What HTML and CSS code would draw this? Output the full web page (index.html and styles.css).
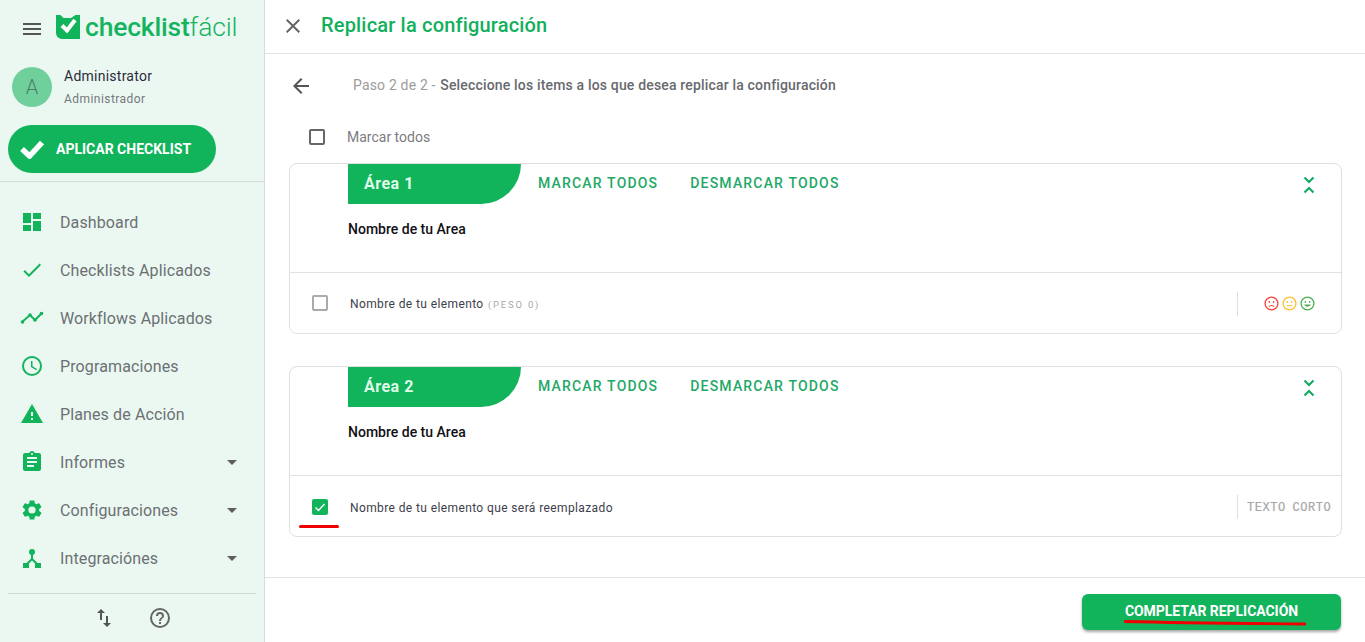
FILE: index.html
```html
<!DOCTYPE html>
<html lang="es">
<head>
<meta charset="utf-8">
<title>Replicar la configuración</title>
<link rel="stylesheet" href="styles.css">
</head>
<body>
<div class="app">
  <aside class="sidebar">
    <div class="brand">
      <svg class="burger" viewBox="0 0 18 12" width="18" height="12"><path d="M0 0h18v2H0zM0 5h18v2H0zM0 10h18v2H0z" fill="#555"/></svg>
      <svg class="logo-mark" viewBox="0 0 24 24" width="24" height="24"><path d="M0 0h4.500l3 3H15l4.500-3H24v24H6a6 6 0 0 1-6-6z" fill="#11b35b"/><path d="M6 10.500l5 5L19 5" fill="none" stroke="#fff" stroke-width="4"/></svg>
      <span class="logo-text"><b>checklist</b><i>fácil</i></span>
    </div>
    <div class="user">
      <div class="avatar">A</div>
      <div class="user-text">
        <div class="user-name">Administrator</div>
        <div class="user-role">Administrador</div>
      </div>
    </div>
    <button class="apply">
      <svg viewBox="0 0 24 20" width="24" height="20"><path d="M2 10l7.500 7L22 3.500" fill="none" stroke="#fff" stroke-width="5.500"/></svg>
      <span>APLICAR CHECKLIST</span>
    </button>
    <nav class="nav">
      <div class="nav-item"><svg viewBox="0 0 24 24" width="24" height="24"><path d="M3 13h8V3H3zm0 8h8v-6H3zm10 0h8V11h-8zm0-18v6h8V3z" fill="#11b35b"/></svg><span>Dashboard</span></div>
      <div class="nav-item"><svg viewBox="0 0 24 24" width="24" height="24"><path d="M9 16.170L4.830 12l-1.420 1.410L9 19 21 7l-1.410-1.410z" fill="#11b35b"/></svg><span>Checklists Aplicados</span></div>
      <div class="nav-item"><svg viewBox="0 0 24 24" width="24" height="24"><path d="M2 16l8-7 5 5 7-7" fill="none" stroke="#11b35b" stroke-width="2"/><g fill="#11b35b"><circle cx="2.500" cy="16" r="1.800"/><circle cx="10" cy="9" r="1.800"/><circle cx="15" cy="14" r="1.800"/><circle cx="21.500" cy="7.500" r="1.800"/></g></svg><span>Workflows Aplicados</span></div>
      <div class="nav-item"><svg viewBox="0 0 24 24" width="24" height="24"><path d="M12 2a10 10 0 1 0 0 20 10 10 0 0 0 0-20zm0 18a8 8 0 1 1 0-16 8 8 0 0 1 0 16zm.500-13H11v6l5.250 3.150.750-1.230-4.500-2.670z" fill="#11b35b"/></svg><span>Programaciones</span></div>
      <div class="nav-item"><svg viewBox="0 0 24 24" width="24" height="24"><path d="M1 21h22L12 2zm12-3h-2v-2h2zm0-4h-2v-4h2z" fill="#11b35b"/></svg><span>Planes de Acción</span></div>
      <div class="nav-item"><svg viewBox="0 0 24 24" width="24" height="24"><path d="M19 3h-4.180C14.400 1.840 13.300 1 12 1s-2.400.84-2.820 2H5a2 2 0 0 0-2 2v14a2 2 0 0 0 2 2h14a2 2 0 0 0 2-2V5a2 2 0 0 0-2-2zm-7 0a1 1 0 1 1 0 2 1 1 0 0 1 0-2zm2 14H7v-2h7zm3-4H7v-2h10zm0-4H7V7h10z" fill="#11b35b"/></svg><span>Informes</span><i class="caret"></i></div>
      <div class="nav-item"><svg viewBox="0 0 24 24" width="24" height="24"><path d="M19.140 12.940a7.500 7.500 0 0 0 0-1.880l2.030-1.580a.5.500 0 0 0 .12-.61l-1.920-3.320a.5.500 0 0 0-.59-.22l-2.390.96a7 7 0 0 0-1.620-.94l-.36-2.540a.5.500 0 0 0-.48-.41h-3.840a.5.500 0 0 0-.47.410l-.36 2.540a7.300 7.300 0 0 0-1.620.94l-2.390-.96a.5.500 0 0 0-.59.220L2.740 8.870a.5.500 0 0 0 .12.610l2.030 1.580a7.500 7.500 0 0 0 0 1.880l-2.030 1.580a.5.500 0 0 0-.12.610l1.920 3.320c.12.220.37.290.59.220l2.390-.96c.5.380 1.030.7 1.620.94l.36 2.540c.05.240.24.410.48.410h3.840c.24 0 .44-.17.47-.41l.36-2.540a7 7 0 0 0 1.620-.94l2.390.96c.22.080.47 0 .59-.22l1.920-3.320a.5.500 0 0 0-.12-.61zM12 15.600a3.600 3.600 0 1 1 0-7.200 3.600 3.600 0 0 1 0 7.200z" fill="#11b35b"/></svg><span>Configuraciones</span><i class="caret"></i></div>
      <div class="nav-item"><svg viewBox="0 0 24 24" width="24" height="24"><g fill="#11b35b"><circle cx="12" cy="6" r="3"/><rect x="3" y="17" width="6" height="5"/><rect x="15" y="17" width="6" height="5"/></g><path d="M12 7v6l-6 6M12 13l6 6" fill="none" stroke="#11b35b" stroke-width="2"/></svg><span>Integraciónes</span><i class="caret"></i></div>
    </nav>
    <div class="side-foot">
      <svg viewBox="0 0 24 24" width="24" height="24"><path d="M9 3L5 7h3v7h2V7h3zm7 14v-7h-2v7h-3l4 4 4-4z" fill="#555"/></svg>
      <svg viewBox="0 0 24 24" width="24" height="24"><path d="M11 18h2v-2h-2zm1-16a10 10 0 1 0 0 20 10 10 0 0 0 0-20zm0 18a8 8 0 1 1 0-16 8 8 0 0 1 0 16zm0-14a4 4 0 0 0-4 4h2a2 2 0 1 1 4 0c0 2-3 1.750-3 5h2c0-2.250 3-2.500 3-5a4 4 0 0 0-4-4z" fill="#666"/></svg>
    </div>
  </aside>
  <main class="main">
    <header class="top">
      <svg viewBox="0 0 24 24" width="24" height="24"><path d="M19 6.410L17.590 5 12 10.590 6.410 5 5 6.410 10.590 12 5 17.590 6.410 19 12 13.410 17.590 19 19 17.590 13.410 12z" fill="#666"/></svg>
      <h1>Replicar la configuración</h1>
    </header>
    <section class="content">
      <div class="step">
        <svg viewBox="0 0 24 24" width="24" height="24"><path d="M20 11H7.830l5.590-5.590L12 4l-8 8 8 8 1.410-1.410L7.830 13H20z" fill="#555"/></svg>
        <p><span class="step-muted">Paso 2 de 2 - </span><span class="step-main">Seleccione los items a los que desea replicar la configuración</span></p>
      </div>
      <label class="all"><span class="box box-dark"></span><span>Marcar todos</span></label>

      <article class="card">
        <div class="card-head">
          <div class="tab">Área 1</div>
          <span class="link">MARCAR TODOS</span>
          <span class="link">DESMARCAR TODOS</span>
          <svg class="collapse" viewBox="0 0 12 18" width="12" height="18"><path d="M1.500 1.500L6 6l4.500-4.500M1.500 16.500L6 12l4.500 4.500" fill="none" stroke="#11a860" stroke-width="2"/></svg>
        </div>
        <div class="card-name">Nombre de tu Area</div>
        <div class="row">
          <span class="box box-grey"></span>
          <span class="row-text">Nombre de tu elemento <small>(PESO 0)</small></span>
          <div class="row-end faces">
            <svg viewBox="0 0 14 14" width="15" height="15"><circle cx="7" cy="7" r="6" fill="none" stroke="#f44336" stroke-width="1.200"/><circle cx="5" cy="5.500" r=".8" fill="#f44336"/><circle cx="9" cy="5.500" r=".8" fill="#f44336"/><path d="M4.500 10c1-1.600 4-1.600 5 0" fill="none" stroke="#f44336"/></svg>
            <svg viewBox="0 0 14 14" width="15" height="15"><circle cx="7" cy="7" r="6" fill="none" stroke="#fbc02d" stroke-width="1.200"/><circle cx="5" cy="5.500" r=".8" fill="#fbc02d"/><circle cx="9" cy="5.500" r=".8" fill="#fbc02d"/><path d="M4.500 9h5" fill="none" stroke="#fbc02d"/></svg>
            <svg viewBox="0 0 14 14" width="15" height="15"><circle cx="7" cy="7" r="6" fill="none" stroke="#4caf50" stroke-width="1.200"/><circle cx="5" cy="5.500" r=".8" fill="#4caf50"/><circle cx="9" cy="5.500" r=".8" fill="#4caf50"/><path d="M4 8h6c-.5 2.600-5.500 2.600-6 0z" fill="#4caf50"/></svg>
          </div>
        </div>
      </article>

      <article class="card">
        <div class="card-head">
          <div class="tab">Área 2</div>
          <span class="link">MARCAR TODOS</span>
          <span class="link">DESMARCAR TODOS</span>
          <svg class="collapse" viewBox="0 0 12 18" width="12" height="18"><path d="M1.500 1.500L6 6l4.500-4.500M1.500 16.500L6 12l4.500 4.500" fill="none" stroke="#11a860" stroke-width="2"/></svg>
        </div>
        <div class="card-name">Nombre de tu Area</div>
        <div class="row row-low">
          <span class="box box-on"><svg viewBox="0 0 16 16" width="16" height="16"><path d="M3.500 8.500l3 3 6-6.500" fill="none" stroke="#fff" stroke-width="1.400"/></svg><i class="red-mark"></i></span>
          <span class="row-text">Nombre de tu elemento que será reemplazado</span>
          <div class="row-end type">TEXTO CORTO</div>
        </div>
      </article>
    </section>
    <footer class="bottom">
      <button class="complete">COMPLETAR REPLICACIÓN<svg class="scribble" viewBox="0 0 182 6" width="182" height="6"><path d="M1 1.500C60 3 120 3.500 181 4" fill="none" stroke="#f00000" stroke-width="2.800" stroke-linecap="round"/></svg></button>
    </footer>
  </main>
</div>
</body>
</html>
```
FILE: styles.css
```css
* { box-sizing: border-box; }
html, body { margin: 0; height: 100%; overflow: hidden; }
body { font-family: Roboto, "Liberation Sans", sans-serif; background: #fff; }
.app { display: flex; height: 642px; }

.sidebar { width: 265px; flex: none; background: #ebf8f2; border-right: 1px solid #d8dcdb; display: flex; flex-direction: column; }
.brand { height: 55px; display: flex; align-items: center; padding: 3px 0 0 23px; }
.burger { margin-right: 15px; }
.logo-mark { margin: -4px 5px 0 0; }
.logo-text { font-size: 26.500px; color: #14b45f; line-height: 1; letter-spacing: -.2px; margin-top: -3px; }
.logo-text b { font-weight: 500; }
.logo-text i { font-style: normal; font-weight: 300; }
.user { display: flex; padding: 12px 0 0 12px; height: 70px; }
.avatar { width: 40px; height: 40px; border-radius: 50%; background: #6fd09c; color: #4c7d68; font-size: 20px; font-weight: 300; display: flex; align-items: center; justify-content: center; }
.user-text { margin-left: 12px; }
.user-name { font-size: 14px; line-height: 18px; color: #2b2b3a; letter-spacing: .25px; }
.user-role { font-size: 12px; line-height: 16px; margin-top: 6px; color: #77797c; letter-spacing: .45px; }
.apply { width: 208px; height: 48px; margin-left: 8px; flex: none; border: 0; border-radius: 24px; background: #11b35b; color: #fff; font: 700 14px Roboto, sans-serif; letter-spacing: 0; display: flex; align-items: center; padding: 0 0 0 12px; }
.apply span { margin-left: 12px; }
.nav { margin-top: 8px; border-top: 1px solid #d6dcd9; padding-top: 16px; height: 412px; margin-bottom: 0; }
.nav-item { height: 48px; display: flex; align-items: center; padding: 0 26px 0 20px; font-size: 16px; color: #6c7073; }
.nav-item svg { flex: none; }
.nav-item span { margin-left: 16px; flex: 1; letter-spacing: .12px; }
.caret { width: 0; height: 0; border-left: 5px solid transparent; border-right: 5px solid transparent; border-top: 5px solid #5d5d5d; margin-right: 1px; }
.side-foot { margin: 0 8px; border-top: 1px solid #cfd6d3; display: flex; justify-content: center; gap: 32px; padding: 12px 0 0 0; }

.main { flex: 1; min-width: 0; display: flex; flex-direction: column; }
.top { height: 54px; border-bottom: 1px solid #e2e2e2; display: flex; align-items: center; padding: 0 0 2px 16px; flex: none; }
.top svg { flex: none; }
.top h1 { margin: -2px 0 0 16px; font-size: 20px; font-weight: 500; color: #12b05c; line-height: 1; letter-spacing: .18px; }
.content { flex: 1; padding: 0 23px 0 24px; }
.step { display: flex; align-items: center; height: 24px; margin-top: 20px; }
.step p { margin: -2px 0 0 40px; font-size: 14px; letter-spacing: .17px; }
.step-muted { color: #9c9c9c; }
.step-main { color: #67696e; font-weight: 500; margin-left: 1px; }
.all { display: flex; align-items: center; height: 20px; margin: 29px 0 16px; padding-left: 20px; font-size: 14px; color: #7b7b80; }
.all .box { margin-right: 22px; }
.box { width: 16px; height: 16px; border-radius: 2px; display: block; flex: none; position: relative; }
.box-dark { border: 2px solid #666; }
.box-grey { border: 2px solid #aaa; }
.box-on { background: #11b35b; }
.box-on svg { display: block; }
.red-mark { position: absolute; left: -13px; top: 26px; width: 40px; height: 3px; background: #f00000; border-radius: 2px; }
.card { height: 171px; border: 1px solid #e0e0e0; border-radius: 8px; margin-bottom: 32px; }
.card-head { display: flex; align-items: center; height: 40px; padding-left: 58px; }
.tab { width: 173px; height: 40px; background: #11b35b; color: #dffbe9; font-size: 16px; font-weight: 700; letter-spacing: .5px; padding-left: 16px; line-height: 40px; border-radius: 0 0 40px 0; margin-right: 17px; }
.link { font-size: 14px; font-weight: 500; color: #1fa866; letter-spacing: 1.180px; margin-right: 32px; line-height: 39px; height: 40px; }
.collapse { margin-left: auto; margin-right: 26px; margin-top: 1px; }
.card-name { height: 68px; padding: 17px 0 0 58px; font-size: 14px; font-weight: 500; line-height: 16px; color: #101015; }
.row { height: 61px; border-top: 1px solid #e2e2e2; display: flex; align-items: center; padding: 0 10px 0 22px; }
.row-low { padding-top: 2px; }
.row-text { margin: 1px 0 0 22px; font-size: 12px; color: #3d3e4a; letter-spacing: .39px; }
.row-text small { font-size: 9.500px; color: #a8a8a8; letter-spacing: 1.800px; margin-left: 1px; }
.row-end { margin-left: auto; height: 24px; border-left: 1px solid #dedede; display: flex; align-items: center; }
.faces { width: 94px; padding-left: 26px; gap: 3px; margin-top: 1px; }
.type { width: 94px; padding: 2px 0 0 9px; white-space: nowrap; font-family: "Liberation Mono", monospace; font-size: 12px; color: #a6a6a6; letter-spacing: .55px; word-spacing: -1px; -webkit-text-stroke: .2px #a6a6a6; }

.bottom { height: 65px; flex: none; border-top: 1px solid #e2e2e2; display: flex; justify-content: flex-end; padding: 16px 24px 0 0; }
.complete { width: 259px; height: 36px; border: 0; border-radius: 6px; background: #11b35b; color: #fff; font: 700 14px Roboto, sans-serif; letter-spacing: -.05px; box-shadow: 0 2px 3px rgba(0,0,0,.35); position: relative; padding: 0 0 2px 0; }
.scribble { position: absolute; left: 42px; top: 26px; }
```
